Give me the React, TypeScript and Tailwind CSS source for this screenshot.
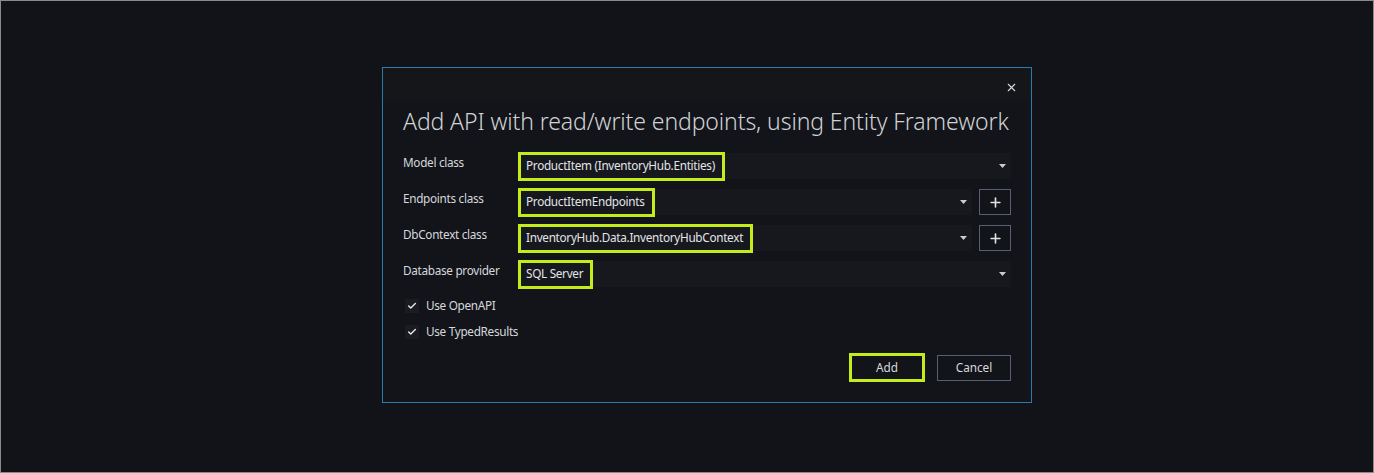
import { Check, Plus, X } from "lucide-react";

const font = { fontFamily: '"Segoe UI", "Noto Sans", "Open Sans", sans-serif' };

// small down-pointing caret used by the combo boxes
const Caret = () => (
  <svg width="7" height="4" viewBox="0 0 7 4" className="shrink-0">
    <path d="M0 0h7L3.5 4z" fill="#c9ccd2" />
  </svg>
);

const Highlight = ({ children }: { children: React.ReactNode }) => (
  <span className="inline-flex h-[29px] items-center whitespace-nowrap border-[3px] border-[#c3ec1b] pl-[5px] pr-[7px] text-[11.75px] tracking-[-0.3px] text-[#e3e5e8]">
    {children}
  </span>
);

const Combo = ({
  label,
  value,
  withAdd,
}: {
  label: string;
  value: string;
  withAdd?: boolean;
}) => (
  <div className="flex h-[36px] items-center">
    <div className="w-[115px] shrink-0 pb-[7px] text-[11.75px] tracking-[-0.3px] text-[#d6d8dc]">
      {label}
    </div>
    <div className="flex h-[26px] flex-1 items-center justify-between bg-[#16181d] pr-[5px]">
      <Highlight>{value}</Highlight>
      <Caret />
    </div>
    {withAdd && (
      <button className="ml-[7px] flex h-[26px] w-[32px] items-center justify-center border border-[#566070] text-[#dfe1e5]">
        <Plus size={15} strokeWidth={2.6} />
      </button>
    )}
  </div>
);

const CheckRow = ({ label }: { label: string }) => (
  <div className="flex h-[26px] items-center">
    <span className="ml-[2px] flex h-[14px] w-[14px] items-center justify-center bg-[#1a1c21] text-[#e4e6ea]">
      <Check size={10} strokeWidth={3.4} />
    </span>
    <span className="ml-[7px] text-[11.75px] tracking-[-0.3px] text-[#d6d8dc]">{label}</span>
  </div>
);

export default function App() {
  return (
    <div
      className="h-[473px] w-full border border-[#8a8a8a] bg-[#111318] pl-[381px] pt-[66px]"
      style={font}
    >
      <div className="flex h-[336px] w-[650px] flex-col border border-[#2a7ba8] bg-[#121419]">
        <div className="flex h-[32px] items-start justify-end bg-[#14161a] pr-[13px] pt-[13px]">
          <X size={13} strokeWidth={2} className="text-[#d8dade]" />
        </div>

        <div className="px-[20px]">
          <h1 className="mt-[5px] whitespace-nowrap text-[23px] font-light leading-[32px] tracking-[-0.1px] text-[#cfd2d6]">
            Add API with read/write endpoints, using Entity Framework
          </h1>

          <div className="mt-[11px] flex flex-col">
            <Combo label="Model class" value="ProductItem (InventoryHub.Entities)" />
            <Combo label="Endpoints class" value="ProductItemEndpoints" withAdd />
            <Combo label="DbContext class" value="InventoryHub.Data.InventoryHubContext" withAdd />
            <Combo label="Database provider" value="SQL Server" />
          </div>

          <div className="mt-[1px] flex flex-col">
            <CheckRow label="Use OpenAPI" />
            <CheckRow label="Use TypedResults" />
          </div>

          <div className="mt-[8px] flex items-center justify-end gap-[12px]">
            <button className="flex h-[29px] w-[76px] items-center justify-center border-[3px] border-[#c3ec1b] text-[11.75px] text-[#d6d8dc]">
              Add
            </button>
            <button className="flex h-[26px] w-[74px] items-center justify-center border border-[#566070] text-[11.75px] text-[#d6d8dc]">
              Cancel
            </button>
          </div>
        </div>
      </div>
    </div>
  );
}
